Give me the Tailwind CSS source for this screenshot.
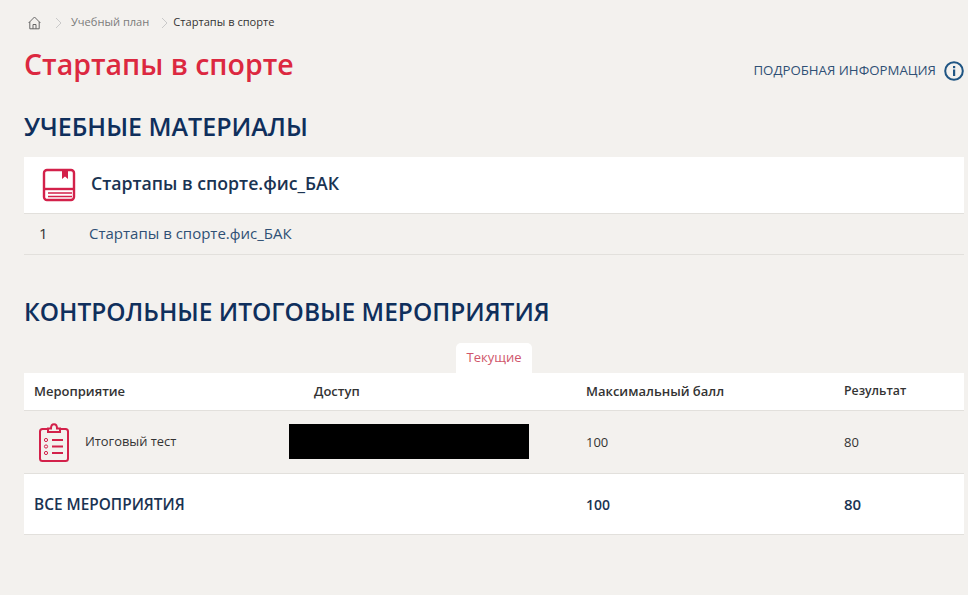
<!DOCTYPE html>
<html lang="ru">
<head>
    <meta charset="UTF-8">
    <meta name="viewport" content="width=device-width, initial-scale=1.0">
    <script src="https://cdn.jsdelivr.net/npm/@tailwindcss/browser@4"></script>
    <title>Стартапы в спорте</title>
</head>
<body class="bg-[#f3f1ee] min-h-screen overflow-hidden font-['Open_Sans',sans-serif] text-[#333]">
    <div class="pl-6 pr-1 w-[968px] h-[595px]">
        <!-- хлебные крошки -->
        <nav class="flex items-center h-[45px] pl-[4px] text-[11.1px] text-[#7b7b7b]">
            <svg class="w-[13px] h-[14px]" viewBox="0 0 13 14" fill="none" stroke="#666" stroke-width="1"><path d="M0.6 7 L6.5 1 L12.4 7 M1.8 5.8 V12.8 H11.2 V5.8 M5 12.8 V8.5 H8 V12.8"/></svg>
            <svg class="w-[7px] h-[12px] ml-[14px]" viewBox="0 0 7 12" fill="none" stroke="#c9c9c9" stroke-width="1"><path d="M1 1 L6 6 L1 11"/></svg>
            <span class="ml-[9px]">Учебный план</span>
            <svg class="w-[7px] h-[12px] ml-[12px]" viewBox="0 0 7 12" fill="none" stroke="#c9c9c9" stroke-width="1"><path d="M1 1 L6 6 L1 11"/></svg>
            <span class="ml-[5px] text-[#333]">Стартапы в спорте</span>
        </nav>

        <div class="flex justify-between">
            <h1 class="text-[28.5px] leading-[38px] font-semibold text-[#dc2840]">Стартапы в спорте</h1>
            <a class="flex items-center gap-2 mt-[13px] h-[26px] text-[13.25px] text-[#2f5075]">
                ПОДРОБНАЯ ИНФОРМАЦИЯ
                <svg class="w-[20px] h-[20px]" viewBox="0 0 20 20" fill="none"><circle cx="10" cy="10" r="8.8" stroke="#1f5583" stroke-width="2"/><rect x="9" y="8.5" width="2.2" height="6.5" fill="#1f5583"/><rect x="9" y="5" width="2.2" height="2.2" fill="#1f5583"/></svg>
            </a>
        </div>

        <h2 class="mt-[26px] text-[25px] leading-[32px] font-semibold text-[#0f2f5c]">УЧЕБНЫЕ МАТЕРИАЛЫ</h2>

        <section class="mt-[15px]">
            <div class="flex items-center h-[57px] bg-white border-b border-[#e2e0dc]">
                <svg class="ml-[18px] w-[34px] h-[34px]" viewBox="0 0 34 34" fill="none" stroke="#d3214a" stroke-width="2.4"><rect x="2" y="2" width="30" height="30" rx="3"/><path d="M2 21 H32"/><path d="M6 25 H30 M6 28.5 H30" stroke-width="1.6"/><path d="M20 2 H26 V11 L23 8.5 L20 11 Z" fill="#d3214a" stroke="none"/></svg>
                <span class="ml-[15px] pb-[4px] text-[17.7px] font-semibold text-[#1a3352]">Стартапы в спорте.фис_БАК</span>
            </div>
            <div class="flex items-center h-[41px] border-b border-[#e2e0dc] text-[15px]">
                <span class="w-[65px] pl-[15px] pb-[2px]">1</span>
                <a class="pb-[2px] text-[#2f5075]">Стартапы в спорте.фис_БАК</a>
            </div>
        </section>

        <h2 class="mt-[41px] text-[24.5px] leading-[32px] font-semibold text-[#0f2f5c]">КОНТРОЛЬНЫЕ ИТОГОВЫЕ МЕРОПРИЯТИЯ</h2>

        <div class="mt-[15px] flex pl-[432px]">
            <div class="w-[76px] h-[30px] bg-white rounded-t-[5px] flex items-center justify-center text-[13px] text-[#d0566b]">Текущие</div>
        </div>

        <div class="grid grid-cols-[280px_282px_258px_120px]">
            <div class="h-[38px] bg-white border-b border-[#e2e0dc] flex items-center pl-[10px] text-[13px] font-semibold">Мероприятие</div>
            <div class="h-[38px] bg-white border-b border-[#e2e0dc] flex items-center pl-[10px] text-[13px] font-semibold">Доступ</div>
            <div class="h-[38px] bg-white border-b border-[#e2e0dc] flex items-center text-[13px] font-semibold">Максимальный балл</div>
            <div class="h-[38px] bg-white border-b border-[#e2e0dc] flex items-center text-[12.3px] font-semibold">Результат</div>

            <div class="h-[63px] border-b border-[#e2e0dc] flex items-center text-[12.9px]">
                <svg class="ml-[15px] mt-[1px] w-[30px] h-[39px]" viewBox="0 0 30 39" fill="none" stroke="#d3214a" stroke-width="2"><path d="M9 6 H3.5 Q1 6 1 8.5 V35.5 Q1 38 3.5 38 H26.5 Q29 38 29 35.5 V8.5 Q29 6 26.5 6 H21"/><path d="M9 9 V5.5 H12 Q12 1.2 15 1.2 Q18 1.2 18 5.5 H21 V9 Z"/><circle cx="7" cy="17" r="1.6" stroke-width="1"/><circle cx="7" cy="23.5" r="1.6" stroke-width="1"/><circle cx="7" cy="30" r="1.6" stroke-width="1"/><path d="M13 17 H24 M13 23.5 H24 M13 30 H24"/></svg>
                <span class="ml-[16px]">Итоговый тест</span>
            </div>
            <div class="h-[63px] border-b border-[#e2e0dc] flex items-center">
                <div class="w-[240px] h-[35px] bg-black -ml-[15px] mb-[2px]"></div>
            </div>
            <div class="h-[63px] border-b border-[#e2e0dc] flex items-center pt-[2px] text-[13px]">100</div>
            <div class="h-[63px] border-b border-[#e2e0dc] flex items-center pt-[2px] text-[13px]">80</div>

            <div class="h-[61px] bg-white border-b border-[#e2e0dc] flex items-center pl-[10px] pt-[2px] text-[15.4px] font-semibold text-[#1a3352]">ВСЕ МЕРОПРИЯТИЯ</div>
            <div class="h-[61px] bg-white border-b border-[#e2e0dc]"></div>
            <div class="h-[61px] bg-white border-b border-[#e2e0dc] flex items-center text-[14px] font-semibold text-[#1a3352]">100</div>
            <div class="h-[61px] bg-white border-b border-[#e2e0dc] flex items-center text-[15px] font-semibold text-[#1a3352]">80</div>
        </div>
    </div>
</body>
</html>
